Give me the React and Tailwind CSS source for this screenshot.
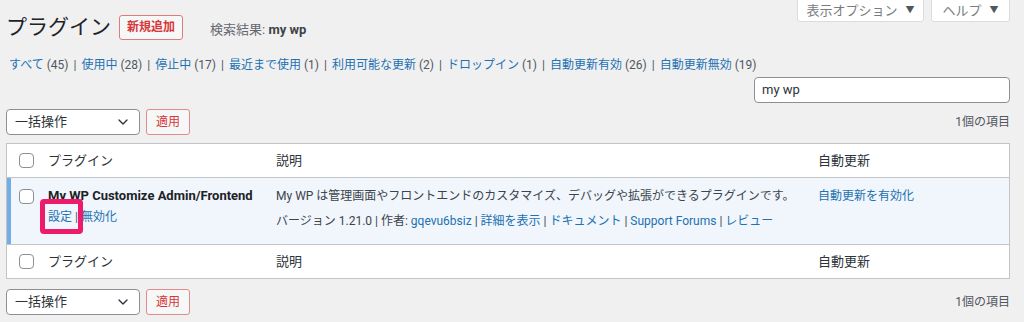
import { ChevronDown } from "lucide-react";

const font = "font-['Roboto','Noto_Sans_CJK_JP',sans-serif]";

const filters = [
  { label: "すべて", count: 45 },
  { label: "使用中", count: 28 },
  { label: "停止中", count: 17 },
  { label: "最近まで使用", count: 1 },
  { label: "利用可能な更新", count: 2 },
  { label: "ドロップイン", count: 1 },
  { label: "自動更新有効", count: 26 },
  { label: "自動更新無効", count: 19 },
];

const Checkbox = () => (
  <span className="block h-[15px] w-[15px] rounded-[4px] border border-[#8c8f94] bg-white" />
);

const BulkActions = () => (
  <div className="flex items-center justify-between">
    <div className="flex items-center gap-[6px]">
      <div className="flex h-[26px] w-[134px] items-center justify-between rounded-[4px] border border-[#8c8f94] bg-white pl-2 pr-2 text-[13px] text-[#2c3338]">
        <span>一括操作</span>
        <ChevronDown className="h-4 w-4 text-[#2c3338]" strokeWidth={2} />
      </div>
      <button
        type="button"
        className="flex h-[26px] items-center rounded-[3px] border border-[#e38b8c] bg-[#f6f7f7] px-[9px] text-[12px] text-[#d63638]"
      >
        適用
      </button>
    </div>
    <span className="text-[12px] text-[#50575e]">1個の項目</span>
  </div>
);

const HeadRow = ({ bordered }) => (
  <div
    className={`grid grid-cols-[33px_226px_542px_1fr] items-center bg-white text-[13px] text-[#2c3338] ${bordered ? "h-[34px] border-b border-[#c3c4c7]" : "h-[33px]"}`}
  >
    <div className="pl-[12px]">
      <Checkbox />
    </div>
    <div className="pl-[8px]">プラグイン</div>
    <div className="pl-[10px]">説明</div>
    <div className="pl-[10px]">自動更新</div>
  </div>
);

const App = () => {
  return (
    <div
      className={`relative h-[322px] w-[1024px] overflow-hidden bg-[#f0f0f1] pl-[6px] pr-[14px] text-[12px] text-[#3c434a] ${font}`}
    >
      <div className="flex items-start justify-between">
        <div className="flex items-center pt-[13px]">
          <h1 className="text-[21px] leading-[28px] font-normal text-[#1d2327]">
            プラグイン
          </h1>
          <button
            type="button"
            className="ml-[8px] flex h-[25px] w-[64px] items-center justify-center rounded-[3px] border border-[#e07a7b] bg-[#f6f7f7] text-[12px] font-bold text-[#d63638]"
          >
            新規追加
          </button>
          <span className="ml-[27px] mt-[6px] text-[13px] text-[#646970]">
            検索結果:{" "}
            <span className="font-bold text-[#3c434a]">my wp</span>
          </span>
        </div>
        <div className="-mt-px flex gap-[7px]">
          <button
            type="button"
            className="flex h-[23px] w-[127px] items-center justify-center gap-[8px] rounded-b-[3px] border border-[#dcdcde] bg-white text-[13px] text-[#787c82]"
          >
            表示オプション
            <span className="text-[9px] text-[#50575e]">▼</span>
          </button>
          <button
            type="button"
            className="flex h-[23px] w-[79px] items-center justify-center gap-[8px] rounded-b-[3px] border border-[#dcdcde] bg-white text-[13px] text-[#787c82]"
          >
            ヘルプ
            <span className="text-[9px] text-[#50575e]">▼</span>
          </button>
        </div>
      </div>

      <ul className="mt-[15px] flex items-center pl-[3px] text-[12px] leading-[18px] text-[#50575e]">
        {filters.map((f, i) => (
          <li key={f.label} className="flex items-center">
            <a className="text-[#2271b1]">{f.label}</a>
            <span className="ml-[3px]">({f.count})</span>
            {i < filters.length - 1 && <span className="mx-[5px]">|</span>}
          </li>
        ))}
      </ul>

      <div className="mt-[3px] flex justify-end">
        <div className="flex h-[26px] w-[256px] items-center rounded-[4px] border border-[#8c8f94] bg-white px-[7px] text-[13px] text-[#2c3338]">
          my wp
        </div>
      </div>

      <div className="mt-[6px]">
        <BulkActions />
      </div>

      <div className="mt-[8px] border border-[#c3c4c7] bg-white">
        <HeadRow bordered />
        <div className="relative grid h-[67px] grid-cols-[33px_226px_542px_1fr] border-b border-[#c3c4c7] bg-[#f0f6fc] text-[12px]">
          <div className="border-l-4 border-[#72aee6] pl-[8px] pt-[11px]">
            <Checkbox />
          </div>
          <div className="pl-[8px] pt-[8px]">
            <div className="text-[13px] font-bold leading-[20px] text-[#1d2327]">
              My WP Customize Admin/Frontend
            </div>
            <div className="mt-[1px] leading-[20px] text-[#50575e]">
              <a className="text-[#2271b1]">設定</a> |{" "}
              <a className="text-[#2271b1]">無効化</a>
            </div>
          </div>
          <div className="pl-[10px] pt-[8px] text-[#3c434a]">
            <p className="leading-[20px]">
              My WP は管理画面やフロントエンドのカスタマイズ、デバッグや拡張ができるプラグインです。
            </p>
            <p className="mt-[5px] leading-[20px]">
              バージョン 1.21.0 | 作者:{" "}
              <a className="text-[#2271b1]">gqevu6bsiz</a> |{" "}
              <a className="text-[#2271b1]">詳細を表示</a> |{" "}
              <a className="text-[#2271b1]">ドキュメント</a> |{" "}
              <a className="text-[#2271b1]">Support Forums</a> |{" "}
              <a className="text-[#2271b1]">レビュー</a>
            </p>
          </div>
          <div className="pl-[10px] pt-[8px] leading-[20px]">
            <a className="text-[#2271b1]">自動更新を有効化</a>
          </div>
          <span className="pointer-events-none absolute left-[33px] top-[21px] h-[35px] w-[43px] rounded-[4px] border-[5px] border-[#ee1a6b]" />
        </div>
        <HeadRow />
      </div>

      <div className="mt-[10px]">
        <BulkActions />
      </div>
    </div>
  );
};

export default App;
